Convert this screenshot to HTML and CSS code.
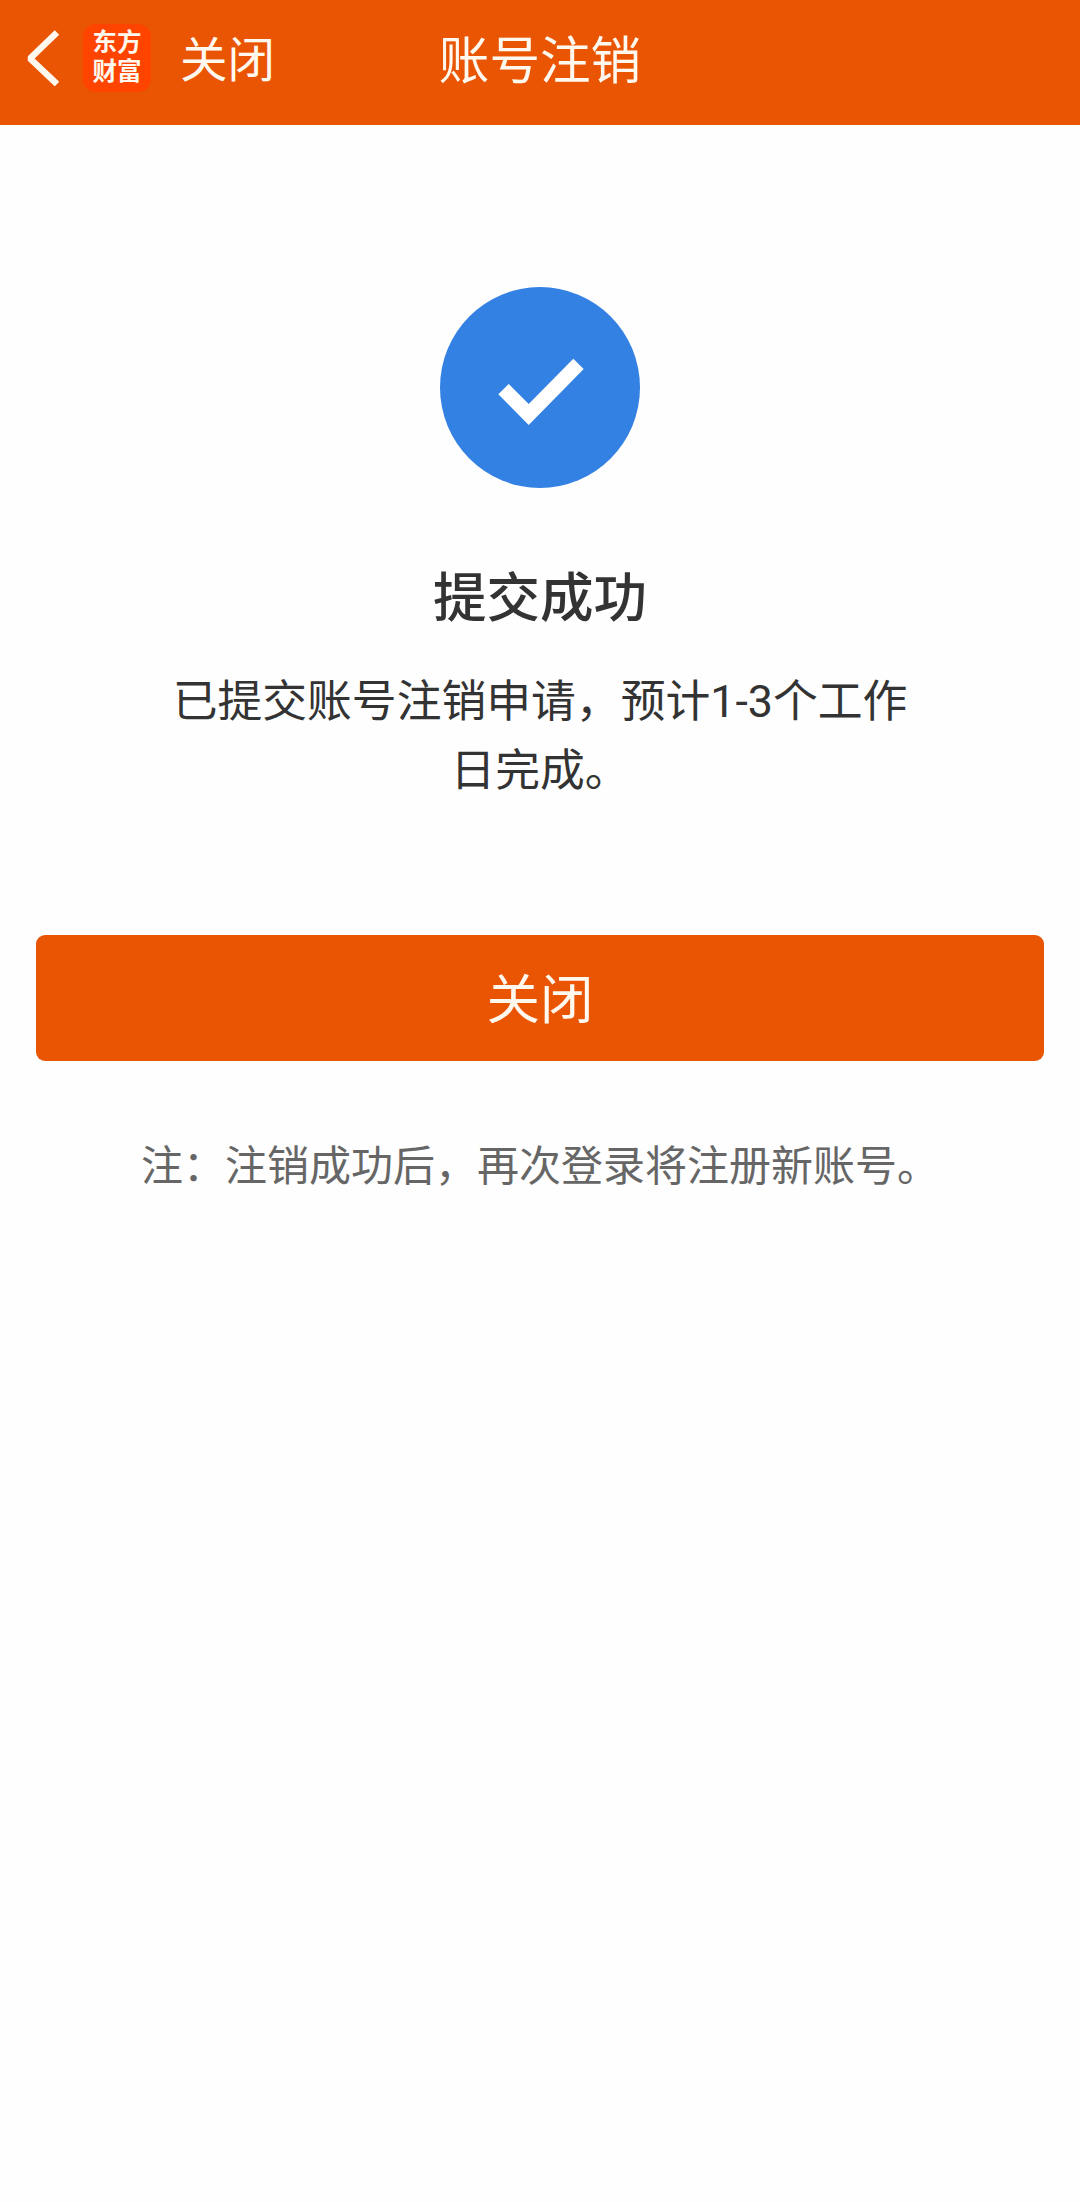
FILE: index.html
```html
<!DOCTYPE html>
<html lang="zh-CN">
<head>
    <meta charset="UTF-8">
    <meta name="viewport" content="width=device-width, initial-scale=1.0">
    <title>账号注销</title>
    <link rel="stylesheet" href="styles.css">
</head>
<body>
    <header class="navbar">
        <div class="nav-left">
            <svg class="back-icon" viewBox="0 0 32 56">
                <path d="M30 2.5 L3 28.5 L30 54" fill="none" stroke="#fff8ee" stroke-width="6.5" stroke-linejoin="bevel"/>
            </svg>
            <div class="logo">东方<br>财富</div>
            <span class="nav-close">关闭</span>
        </div>
        <h1 class="nav-title">账号注销</h1>
    </header>

    <main class="content">
        <svg class="success-icon" viewBox="0 0 200 201">
            <ellipse cx="100" cy="100.5" rx="100" ry="100.5" fill="#3381e3"/>
            <path d="M58.3 107.3 L68.7 97 L88.7 117 L133.3 71.7 L143.7 82 L88.7 138 Z" fill="#fff"/>
        </svg>
        <h2 class="result-title">提交成功</h2>
        <p class="result-desc">已提交账号注销申请，预计1-3个工作日完成。</p>
        <button class="close-btn" type="button">关闭</button>
        <p class="note">注：注销成功后，再次登录将注册新账号。</p>
    </main>
</body>
</html>
```
FILE: styles.css
```css
* {
    box-sizing: border-box;
}
body {
    margin: 0;
    min-height: 100vh;
    background-color: #fefefe;
    color: #333;
    font-family: Roboto, "Noto Sans CJK SC", sans-serif;
}
.navbar {
    display: grid;
    grid-template-columns: 1fr auto 1fr;
    align-items: center;
    height: 125px;
    padding: 0 27px;
    background-color: #ea5504;
    color: #fff8ee;
}
.nav-left {
    display: flex;
    align-items: center;
    padding-bottom: 10px;
}
.back-icon {
    width: 32px;
    height: 56px;
}
.logo {
    width: 68px;
    height: 68px;
    margin-left: 24px;
    padding-top: 4px;
    border-radius: 13px;
    background-color: #ff4400;
    font-size: 24.5px;
    font-weight: 700;
    line-height: 29px;
    text-align: center;
}
.nav-close {
    margin-left: 29px;
    font-size: 47.5px;
    line-height: 60px;
    padding-top: 6px;
}
.nav-title {
    margin: 0;
    padding-bottom: 2px;
    font-size: 50.6px;
    font-weight: 400;
    line-height: 60px;
}
.content {
    display: flex;
    flex-direction: column;
    align-items: center;
    padding: 162px 36px 0;
}
.success-icon {
    width: 200px;
    height: 201px;
}
.result-title {
    margin: 71px 0 0;
    font-size: 53.5px;
    font-weight: 500;
    line-height: 80px;
}
.result-desc {
    width: 740px;
    margin: 28px 0 0;
    font-size: 44.8px;
    line-height: 69px;
    text-align: center;
}
.close-btn {
    width: 100%;
    height: 126px;
    margin-top: 130px;
    padding: 0 0 5px;
    border: none;
    border-radius: 9px;
    background-color: #ea5504;
    color: #fff8ee;
    font-family: inherit;
    font-size: 53.5px;
}
.note {
    margin: 76px 0 0;
    color: #666;
    font-size: 42px;
    line-height: 60px;
}
```
